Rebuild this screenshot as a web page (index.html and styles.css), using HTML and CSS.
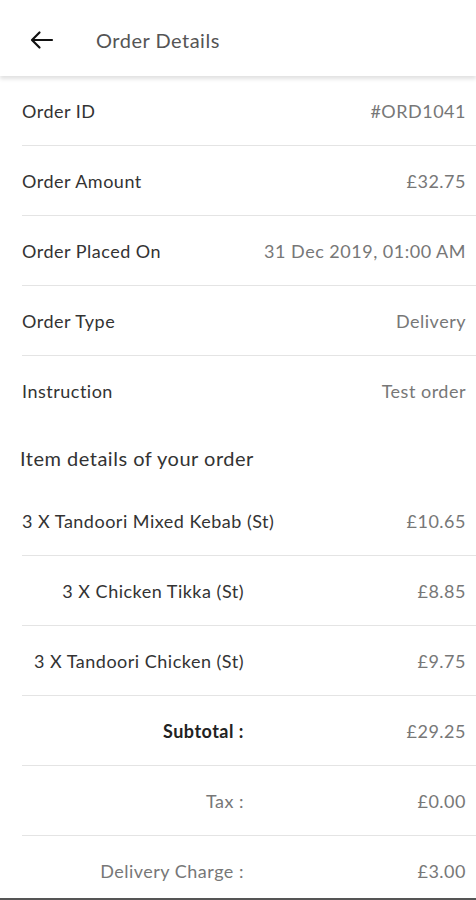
FILE: index.html
```html
<!DOCTYPE html>
<html lang="en">
<head>
  <meta charset="UTF-8">
  <meta name="viewport" content="width=device-width, initial-scale=1.0">
  <title>Order Details</title>
  <link rel="stylesheet" href="styles.css">
</head>
<body>
  <div class="header">
    <span class="back">
      <svg width="26" height="26" viewBox="0 0 26 26"><path d="M3.5 13H23M10.5 5.5L3 13l7.5 7.5" fill="none" stroke="#111" stroke-width="2.2" stroke-linecap="round" stroke-linejoin="round"/></svg>
    </span>
    <span class="title">Order Details</span>
  </div>

  <div class="info">
    <div class="row"><span class="label">Order ID</span><span class="value">#ORD1041</span></div>
    <div class="row"><span class="label">Order Amount</span><span class="value">£32.75</span></div>
    <div class="row"><span class="label">Order Placed On</span><span class="value">31 Dec 2019, 01:00 AM</span></div>
    <div class="row"><span class="label">Order Type</span><span class="value">Delivery</span></div>
    <div class="row last"><span class="label">Instruction</span><span class="value">Test order</span></div>
  </div>

  <div class="section-title">Item details of your order</div>

  <div class="items">
    <div class="row"><span class="item-name">3 X Tandoori Mixed Kebab (St)</span><span class="value">£10.65</span></div>
    <div class="row"><span class="item-name">3 X Chicken Tikka (St)</span><span class="value">£8.85</span></div>
    <div class="row"><span class="item-name">3 X Tandoori Chicken (St)</span><span class="value">£9.75</span></div>
    <div class="row"><span class="item-name bold">Subtotal :</span><span class="value">£29.25</span></div>
    <div class="row"><span class="item-name muted">Tax :</span><span class="value">£0.00</span></div>
    <div class="row last"><span class="item-name muted">Delivery Charge :</span><span class="value">£3.00</span></div>
  </div>
  <div class="bottom-bar"></div>
</body>
</html>
```
FILE: styles.css
```css
body {
  margin: 0;
  padding: 0;
  font-family: Lato, "Open Sans", sans-serif;
  background: #fff;
  color: #333;
  height: 900px;
  overflow: hidden;
}

.header {
  height: 76px;
  display: flex;
  align-items: center;
  background: #fff;
  box-shadow: 0 3px 4px rgba(0, 0, 0, 0.12);
  position: relative;
  z-index: 1;
}

.back {
  width: 26px;
  height: 26px;
  margin-left: 29px;
  margin-top: 4px;
}

.title {
  margin-left: 41px;
  margin-top: 4px;
  font-size: 20px;
  letter-spacing: 0.5px;
  color: #555;
}

.row {
  height: 69px;
  display: flex;
  align-items: center;
  justify-content: space-between;
  margin-left: 22px;
  padding-right: 10px;
  border-bottom: 1px solid #e4e4e4;
  font-size: 18px;
  letter-spacing: 0.5px;
}

.row.last {
  border-bottom: none;
}

.label {
  color: #333;
}

.value {
  color: #777;
  white-space: nowrap;
}

.section-title {
  height: 61px;
  box-sizing: border-box;
  padding-top: 5px;
  margin-left: 20px;
  font-size: 20px;
  letter-spacing: 0.5px;
  color: #333;
  display: flex;
  align-items: center;
}

.item-name {
  width: 222px;
  text-align: right;
  white-space: nowrap;
  color: #333;
}

.item-name.bold {
  font-weight: bold;
  color: #222;
}

.item-name.muted {
  color: #777;
}

.bottom-bar {
  position: fixed;
  left: 0;
  right: 0;
  bottom: 0;
  height: 2px;
  background: #555;
}
```
